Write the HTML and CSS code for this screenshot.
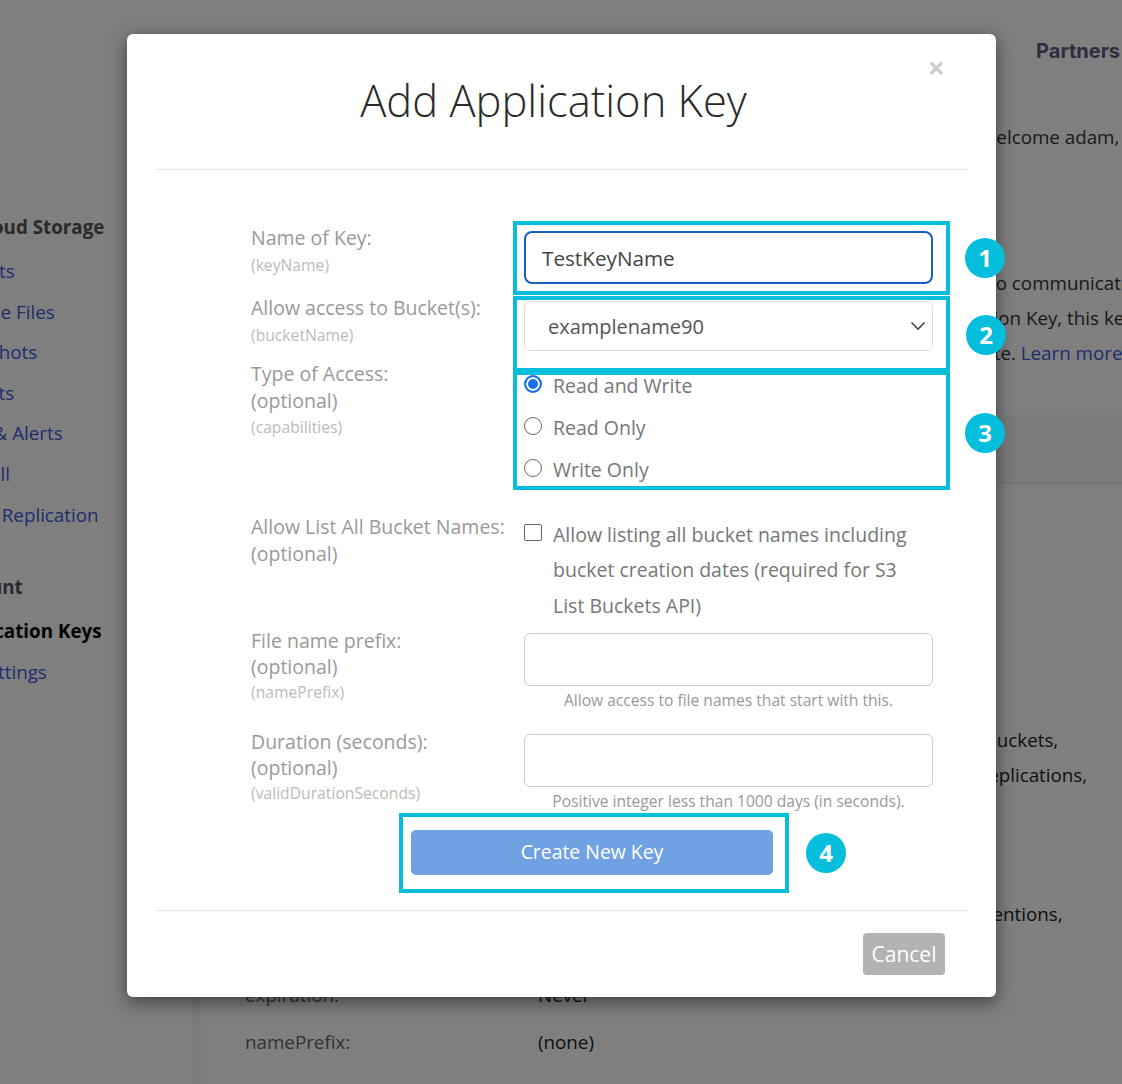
FILE: index.html
```html
<!DOCTYPE html>
<html lang="en">
  <head>
    <meta charset="UTF-8" />
    <title>Add Application Key</title>
    <link rel="stylesheet" href="styles.css">
  </head>
  <body>
    <div class="page">
      <div class="topbar"><span class="partners">Partners</span></div>
      <div class="content">
        <nav class="sidebar">
          <div class="nav-head">B2 Cloud Storage</div>
          <a class="nav-link">Buckets</a>
          <a class="nav-link">Browse Files</a>
          <a class="nav-link">Snapshots</a>
          <a class="nav-link">Reports</a>
          <a class="nav-link">Caps &amp; Alerts</a>
          <a class="nav-link">Fireball</a>
          <a class="nav-link">Cloud Replication</a>
          <div class="nav-head nav-head-account">Account</div>
          <a class="nav-link nav-active">Application Keys</a>
          <a class="nav-link">My Settings</a>
        </nav>
        <main class="main">
          <div class="welcome">Welcome adam,</div>
          <div class="intro">
            <div class="intro-a">to communicate</div>
            <div class="intro-b">Application Key, this key</div>
            <div class="intro-c">site. <a class="learn">Learn more</a></div>
          </div>
          <div class="band"></div>
          <div class="caps">
            <div class="caps-a">writeKeys, deleteKeys, listAllBucketNames, listBuckets,</div>
            <div class="caps-b">deleteBuckets, readBuckets, writeBucketReplications,</div>
            <div class="caps-c">listFiles, readFiles, shareFiles, writeFileRetentions,</div>
          </div>
          <div class="key-row key-row-first"><span class="key-name">expiration:</span><span>Never</span></div>
          <div class="key-row"><span class="key-name">namePrefix:</span><span>(none)</span></div>
        </main>
      </div>
    </div>

    <div class="backdrop"></div>

    <div class="modal">
      <div class="modal-header">
        <span class="close">&times;</span>
        <h1>Add Application Key</h1>
      </div>

      <form class="key-form">
        <div class="form-row row-name">
          <div class="label">Name of Key:<small>(keyName)</small></div>
          <div class="field"><input class="text-input focused" type="text" value="TestKeyName" /></div>
        </div>

        <div class="form-row row-bucket">
          <div class="label">Allow access to Bucket(s):<small>(bucketName)</small></div>
          <div class="field">
            <div class="select">
              <span>examplename90</span>
              <svg width="16" height="10" viewBox="0 0 16 10"><path d="M1.5 1.5 8 8l6.5-6.5" fill="none" stroke="#444" stroke-width="1.6" /></svg>
            </div>
          </div>
        </div>

        <div class="form-row row-type">
          <div class="label">Type of Access:<br />(optional)<small>(capabilities)</small></div>
          <div class="field radios">
            <label class="option"><span class="radio radio-on"></span>Read and Write</label>
            <label class="option"><span class="radio"></span>Read Only</label>
            <label class="option"><span class="radio"></span>Write Only</label>
          </div>
        </div>

        <div class="form-row row-list">
          <div class="label">Allow List All Bucket Names:<br />(optional)</div>
          <div class="field check-field">
            <span class="checkbox"></span>
            <span class="check-text">Allow listing all bucket names including bucket creation dates (required for S3 List Buckets API)</span>
          </div>
        </div>

        <div class="form-row row-prefix">
          <div class="label">File name prefix:<br />(optional)<small>(namePrefix)</small></div>
          <div class="field">
            <input class="text-input" type="text" />
            <div class="hint">Allow access to file names that start with this.</div>
          </div>
        </div>

        <div class="form-row row-duration">
          <div class="label">Duration (seconds):<br />(optional)<small>(validDurationSeconds)</small></div>
          <div class="field">
            <input class="text-input" type="text" />
            <div class="hint">Positive integer less than 1000 days (in seconds).</div>
          </div>
        </div>

        <div class="submit-wrapper">
          <button class="create" type="button">Create New Key</button>
        </div>
      </form>

      <div class="modal-footer">
        <button class="cancel" type="button">Cancel</button>
      </div>

      <div class="callout callout-1"></div>
      <div class="callout callout-2"></div>
      <div class="callout callout-3"></div>
      <div class="callout callout-4"></div>
      <div class="badge badge-1">1</div>
      <div class="badge badge-2">2</div>
      <div class="badge badge-3">3</div>
      <div class="badge badge-4">4</div>
    </div>
  </body>
</html>
```

FILE: styles.css
```css
* {
  box-sizing: border-box;
}

html,
body {
  margin: 0;
  height: 1084px;
  overflow: hidden;
}

body {
  position: relative;
  background: #fff;
  color: #333;
  font-family: "Open Sans", "Liberation Sans", sans-serif;
  font-size: 18.8px;
}

/* page behind the dialog */
.page {
  width: 1122px;
  height: 1084px;
  overflow: hidden;
}

.topbar {
  display: flex;
  justify-content: flex-end;
  height: 105px;
  padding: 38px 2px 0 0;
}

.partners {
  font-family: Inter, "Liberation Sans", sans-serif;
  font-size: 20px;
  font-weight: 700;
  line-height: 27px;
  color: #5f5b86;
}

.content {
  display: flex;
}

.sidebar {
  flex: none;
  width: 201px;
  height: 979px;
  padding-top: 102px;
  border-right: 9px solid #f4f4f4;
  white-space: nowrap;
}

.nav-head {
  margin-left: -54px;
  margin-bottom: 3px;
  line-height: 41px;
  color: #555;
  font-weight: 700;
}

.nav-head-account {
  margin-top: 32px;
}

.nav-link {
  display: block;
  margin-left: -54px;
  line-height: 40.6px;
  color: #3c5ad8;
}

.nav-active {
  color: #000;
  font-weight: 700;
}

.main {
  flex: 1;
  min-width: 0;
  white-space: nowrap;
}

.welcome {
  margin-left: 778px;
  line-height: 64px;
}

.intro {
  margin-top: 97px;
  line-height: 35px;
}

.intro-a {
  margin-left: 788px;
}

.intro-b {
  margin-left: 722px;
}

.intro-c {
  margin-left: 779px;
}

.learn {
  color: #3c5ad8;
}

.band {
  height: 69px;
  margin-top: 44px;
  background: #f4f4f4;
  border-bottom: 1px solid #e4e4e4;
}

.caps {
  margin-top: 239px;
  margin-left: 337px;
  color: #222;
  line-height: 35px;
}

.caps-a {
  margin-left: 45px;
}

.caps-b {
  margin-left: 83px;
}

.caps-c {
  margin-top: 104px;
  margin-left: 92px;
}

.key-row {
  display: flex;
  margin-left: 44px;
  line-height: 26px;
  color: #222;
}

.key-row-first {
  margin-top: 50px;
}

.key-row + .key-row {
  margin-top: 21px;
}

.key-name {
  width: 293px;
  color: #666;
}

.backdrop {
  position: absolute;
  inset: 0;
  background: rgba(0, 0, 0, 0.5);
}

/* dialog */
.modal {
  position: absolute;
  left: 127px;
  top: 34px;
  width: 869px;
  height: 963px;
  padding: 0 29px;
  background: #fff;
  border-radius: 6px;
  box-shadow: 0 5px 18px rgba(0, 0, 0, 0.5);
}

.modal-header {
  height: 136px;
  padding-right: 16px;
  border-bottom: 1px solid #e5e5e5;
  text-align: center;
}

.modal-header h1 {
  margin: 0;
  padding-top: 36px;
  color: #2a2a2a;
  font-size: 43.5px;
  font-weight: 300;
  line-height: 62px;
}

.close {
  position: absolute;
  right: 51px;
  top: 15px;
  color: #ccc;
  font-size: 30px;
  font-weight: 700;
  line-height: 38px;
}

.key-form {
  padding: 55px 0 0 95px;
}

.form-row {
  display: grid;
  grid-template-columns: 273px 409px;
}

.row-name {
  margin-bottom: 11px;
}

.row-bucket {
  margin-bottom: 10px;
}

.row-type {
  height: 153px;
}

.row-list {
  height: 114px;
}

.row-prefix {
  height: 101px;
}

.row-duration {
  height: 101px;
}

.label {
  color: #999;
  font-size: 19.5px;
  line-height: 26.5px;
  white-space: nowrap;
}

.label small {
  display: block;
  color: #bbb;
  font-size: 15.7px;
}

.row-prefix .label,
.row-duration .label {
  line-height: 26px;
}

.row-prefix small,
.row-duration small {
  margin-top: -1px;
}

.field {
  padding-top: 6px;
}

.row-prefix .field,
.row-duration .field {
  padding-top: 5px;
}

.text-input {
  display: block;
  width: 100%;
  height: 53px;
  padding: 0 16px;
  border: 1px solid #ccc;
  border-radius: 6px;
  color: #444;
  font: 20.7px "Open Sans", sans-serif;
  outline: none;
}

.focused {
  border: 2px solid #1a5cc4;
  border-radius: 8px;
}

.select {
  display: flex;
  align-items: center;
  justify-content: space-between;
  height: 50px;
  padding: 0 6px 0 23px;
  border: 1px solid #ddd;
  border-radius: 6px;
  color: #555;
  font-size: 20px;
}

.radios {
  padding-top: 3px;
}

.option {
  display: flex;
  align-items: center;
  gap: 11px;
  height: 42px;
  color: #777;
  font-size: 19.5px;
}

.radio {
  flex: none;
  width: 18px;
  height: 18px;
  margin-top: -2px;
  border: 1.5px solid #666;
  border-radius: 50%;
}

.radio-on {
  border: 2px solid #1a6ef0;
  background: #1a6ef0;
  box-shadow: inset 0 0 0 2px #fff;
}

.check-field {
  display: flex;
  gap: 11px;
  padding-top: 3px;
}

.checkbox {
  flex: none;
  width: 18px;
  height: 17px;
  margin-top: 7px;
  border: 1.5px solid #666;
  border-radius: 2px;
}

.check-text {
  color: #777;
  font-size: 19.5px;
  line-height: 35.3px;
}

.hint {
  margin-top: 3px;
  color: #999;
  font-size: 15.6px;
  line-height: 22px;
  text-align: center;
}

.submit-wrapper {
  padding-left: 160px;
}

.create {
  display: block;
  width: 362px;
  height: 45px;
  padding: 0 0 2px;
  border: 0;
  border-radius: 5px;
  background: #6fa1e3;
  color: #fff;
  font: 19.4px "Open Sans", sans-serif;
}

.modal-footer {
  display: flex;
  justify-content: flex-end;
  margin-top: 35px;
  padding: 22px 22px 0 0;
  border-top: 1px solid #e5e5e5;
}

.cancel {
  width: 82px;
  height: 42px;
  padding: 0;
  border: 0;
  border-radius: 4px;
  background: #b3b3b3;
  color: #fff;
  font: 21px "Open Sans", sans-serif;
}

/* teal annotation boxes and numbers laid over the dialog */
.callout {
  position: absolute;
  border: 4px solid #05bedb;
}

.callout-1 {
  left: 386px;
  top: 187px;
  width: 437px;
  height: 74px;
}

.callout-2 {
  left: 386px;
  top: 262px;
  width: 437px;
  height: 76px;
}

.callout-3 {
  left: 386px;
  top: 337px;
  width: 437px;
  height: 119px;
}

.callout-4 {
  left: 272px;
  top: 779px;
  width: 390px;
  height: 80px;
}

.badge {
  position: absolute;
  width: 40px;
  height: 40px;
  border-radius: 50%;
  background: #05bedb;
  color: #fff;
  font-size: 24px;
  font-weight: 700;
  line-height: 40px;
  text-align: center;
}

.badge-1 {
  left: 838px;
  top: 204px;
}

.badge-2 {
  left: 839px;
  top: 281px;
}

.badge-3 {
  left: 838px;
  top: 379px;
}

.badge-4 {
  left: 679px;
  top: 799px;
}
```
